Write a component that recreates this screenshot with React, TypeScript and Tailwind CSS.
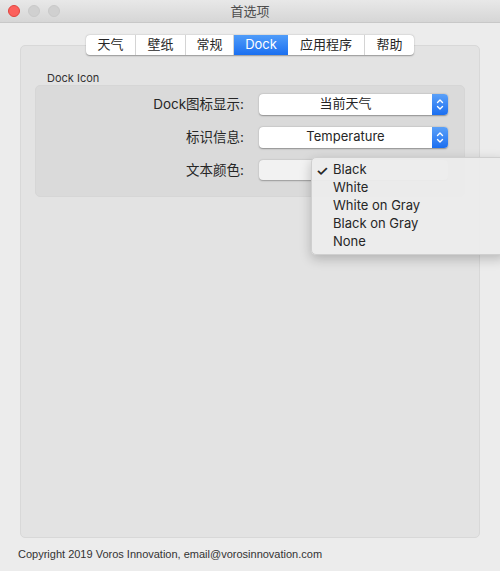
const font = "font-['Inter','Noto_Sans_CJK_SC',sans-serif]";

const tabs = ["天气", "壁纸", "常规", "Dock", "应用程序", "帮助"];
const tabWidths = ["w-[50px]", "w-[50px]", "w-[48px]", "w-[54px]", "w-[77px]", "w-[49px]"];
const colors = ["Black", "White", "White on Gray", "Black on Gray", "None"];

function Stepper() {
  return (
    <div className="flex h-full w-[16px] items-center justify-center rounded-r-[4px] bg-gradient-to-b from-[#5aa0f8] to-[#1a6ef0]">
      <svg width="8" height="13" viewBox="0 0 8 13" fill="none" stroke="white" strokeWidth="1.4" strokeLinecap="round" strokeLinejoin="round">
        <path d="M1.5 4.5 L4 2 L6.5 4.5" />
        <path d="M1.5 8.5 L4 11 L6.5 8.5" />
      </svg>
    </div>
  );
}

function PopUp({ value }: { value: string }) {
  return (
    <div className="flex h-[21px] w-[189px] items-center rounded-[4px] bg-white shadow-[0_0.5px_1.5px_rgba(0,0,0,0.35)]">
      <div className="flex-1 text-center text-[13px] text-[#262626]">{value}</div>
      <Stepper />
    </div>
  );
}

function Row({ label, children }: { label: string; children: React.ReactNode }) {
  return (
    <div className="flex items-center">
      <div className="w-[208px] text-right text-[13.5px] text-[#262626]">{label}</div>
      <div className="ml-[15px]">{children}</div>
    </div>
  );
}

export default function App() {
  return (
    <div className={`${font} relative h-[571px] w-[500px] overflow-hidden bg-[#ececec]`}>
      {/* title bar */}
      <div className="relative flex h-[23px] items-center border-b border-[#c8c8c8] bg-gradient-to-b from-[#e8e8e8] to-[#d6d6d6]">
        <div className="flex gap-[8px] pl-[8px]">
          <div className="h-[12px] w-[12px] rounded-full border border-[#e0443e] bg-[#fc605c]" />
          <div className="h-[12px] w-[12px] rounded-full border border-[#c9c9c9] bg-[#d0d0d0]" />
          <div className="h-[12px] w-[12px] rounded-full border border-[#c9c9c9] bg-[#d0d0d0]" />
        </div>
        <div className="absolute inset-x-0 pt-[1px] text-center text-[13px] text-[#4d4d4d]">首选项</div>
      </div>

      {/* tab view */}
      <div className="relative mx-[20px] mt-[22px] h-[493px] rounded-[5px] border border-[#d8d8d8] bg-[#e3e3e3]">
        <div className="absolute -top-[11px] left-[65px] flex h-[20px] overflow-hidden rounded-[4px] bg-white shadow-[0_0.5px_1.5px_rgba(0,0,0,0.35)]">
          {tabs.map((t, i) => (
            <div
              key={t}
              className={`${tabWidths[i]} flex items-center justify-center text-[13px] ${
                t === "Dock"
                  ? "bg-gradient-to-b from-[#4f9cf9] to-[#1a6ff0] text-white"
                  : "border-r border-[#d4d4d4] text-[#262626] last:border-r-0"
              }`}
            >
              {t}
            </div>
          ))}
        </div>

        <div className="pl-[26px] pt-[24px] text-[11px] text-[#333]">Dock Icon</div>
        <div className="mx-[14px] -mt-[2px] flex h-[112px] flex-col gap-[12px] rounded-[5px] border border-[#d6d6d6] bg-[#dadada] pt-[8px]">
          <Row label="Dock图标显示:">
            <PopUp value="当前天气" />
          </Row>
          <Row label="标识信息:">
            <PopUp value="Temperature" />
          </Row>
          <Row label="文本颜色:">
            <div className="h-[20px] w-[189px] rounded-[4px] bg-[#f2f2f2] shadow-[0_0.5px_1.5px_rgba(0,0,0,0.3)]" />
          </Row>
        </div>
      </div>

      {/* footer */}
      <div className="pl-[18px] pt-[8px] font-['Liberation_Sans',sans-serif] text-[11px] text-[#333]">
        Copyright 2019 Voros Innovation, email@vorosinnovation.com
      </div>

      {/* popup menu */}
      <div className="absolute left-[311px] top-[157px] w-[195px] rounded-[5px] border border-[#cfcfcf] bg-[#ececec]/95 py-[3px] shadow-[0_4px_12px_rgba(0,0,0,0.22)]">
        {colors.map((c, i) => (
          <div key={c} className="flex h-[18px] items-center text-[13px] text-[#262626]">
            <span className="w-[21px] pl-[4px] text-[14px] font-semibold">{i === 0 ? "✓" : ""}</span>
            {c}
          </div>
        ))}
      </div>
    </div>
  );
}
